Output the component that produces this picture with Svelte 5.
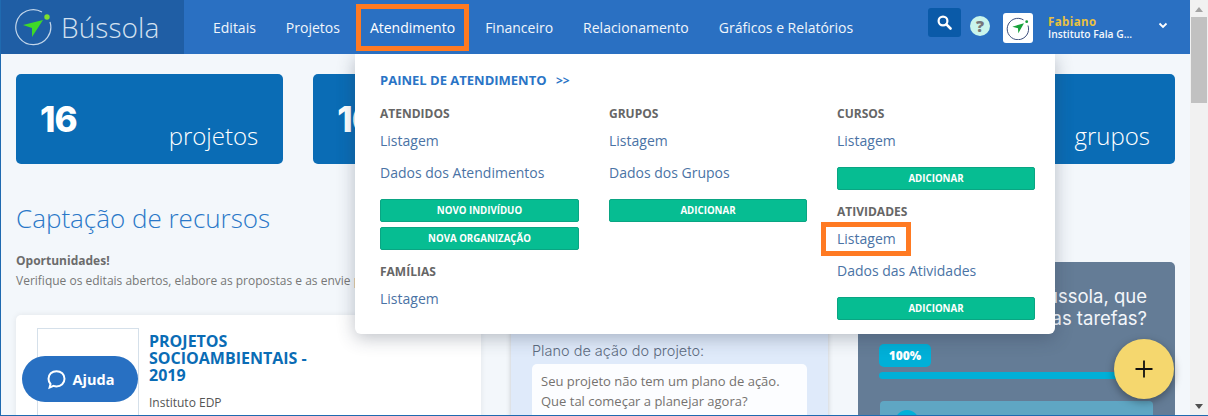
<script>
  const nav = ['Editais', 'Projetos', 'Atendimento', 'Financeiro', 'Relacionamento', 'Gráficos e Relatórios'];
</script>

<div class="window">
  <div class="main">
    <header class="topbar">
      <div class="brand">
        <svg class="compass" width="38" height="38" viewBox="0 0 38 38" aria-hidden="true">
          <path d="M28 4A17.500 17.500 0 1 0 36 14" fill="none" stroke="#c3d6ea" stroke-width="1.200" />
          <circle cx="33" cy="9" r="2.700" fill="#7ee02c" />
          <path d="M9 17 L29 12 L18 29 L18 20 Z" fill="#3fd928" />
        </svg>
        <span class="wordmark">Bússola</span>
      </div>
      <nav class="nav">
        {#each nav as item}
          <a class="nav-item" class:hot={item === 'Atendimento'} href="#top">{item}</a>
        {/each}
      </nav>
      <div class="tools">
        <button class="search" aria-label="Buscar">
          <svg width="15" height="15" viewBox="0 0 15 15"><circle cx="6" cy="6" r="4.400" fill="none" stroke="#fff" stroke-width="2.200"/><path d="M9.400 9.400 L13.500 13.500" stroke="#fff" stroke-width="2.600" stroke-linecap="round"/></svg>
        </button>
        <span class="help">?</span>
        <span class="org-logo">
          <svg width="24" height="24" viewBox="0 0 24 24" aria-hidden="true">
            <path d="M17.500 3.900A10.700 10.700 0 1 0 22 9.500" fill="none" stroke="#3c4e7c" stroke-width="1"/>
            <circle cx="20.700" cy="5.700" r="1.400" fill="#18a13a"/>
            <path d="M6.300 10.700 L18 7.300 L12.300 17.300 L12 12.300 Z" fill="#18a13a"/>
          </svg>
        </span>
        <div class="user">
          <strong>Fabiano</strong>
          <span>Instituto Fala G...</span>
        </div>
        <svg class="chev" width="10" height="7" viewBox="0 0 10 7"><path d="M1.500 1.500 L5 5 L8.500 1.500" fill="none" stroke="#fff" stroke-width="1.800"/></svg>
      </div>
    </header>

    <div class="content">
      <section class="stats">
        <div class="stat"><b>16</b><span>projetos</span></div>
        <div class="stat"><b>16</b><span>editais</span></div>
        <div class="stat"><b>16</b><span>pessoas</span></div>
        <div class="stat"><b>16</b><span>grupos</span></div>
      </section>

      <h1>Captação de recursos</h1>

      <section class="cols">
        <div class="col-left">
          <p class="opp"><b>Oportunidades!</b></p>
          <p class="opp-text">Verifique os editais abertos, elabore as propostas e as envie para os financiadores.</p>
          <article class="edital">
            <div class="thumb"></div>
            <div>
              <h2>PROJETOS SOCIOAMBIENTAIS - 2019</h2>
              <p>Instituto EDP</p>
            </div>
          </article>
        </div>
        <div class="plan">
          <h3>Plano de ação do projeto:</h3>
          <div class="plan-box">Seu projeto não tem um plano de ação.<br />Que tal começar a planejar agora?</div>
        </div>
        <div class="tasks">
          <h3>Que tal usar o Bússola, que<br />organiza as tarefas?</h3>
          <span class="pct">100%</span>
          <div class="bar"></div>
          <div class="task"><i></i></div>
        </div>
      </section>

      <div class="dropdown">
        <a class="panel-link" href="#top">PAINEL DE ATENDIMENTO <span>&gt;&gt;</span></a>
        <div class="menu-grid">
          <div class="menu-col">
            <h4>ATENDIDOS</h4>
            <a class="link" href="#top">Listagem</a>
            <a class="link" href="#top">Dados dos Atendimentos</a>
            <button class="act first">NOVO INDIVÍDUO</button>
            <button class="act tight">NOVA ORGANIZAÇÃO</button>
            <h4 class="later">FAMÍLIAS</h4>
            <a class="link" href="#top">Listagem</a>
          </div>
          <div class="menu-col">
            <h4>GRUPOS</h4>
            <a class="link" href="#top">Listagem</a>
            <a class="link" href="#top">Dados dos Grupos</a>
            <button class="act first">ADICIONAR</button>
          </div>
          <div class="menu-col">
            <h4>CURSOS</h4>
            <a class="link" href="#top">Listagem</a>
            <button class="act after-one">ADICIONAR</button>
            <h4 class="later">ATIVIDADES</h4>
            <a class="link boxed" href="#top">Listagem</a>
            <a class="link" href="#top">Dados das Atividades</a>
            <button class="act first">ADICIONAR</button>
          </div>
        </div>
      </div>

      <button class="ajuda">
        <svg width="21" height="21" viewBox="0 0 21 21" aria-hidden="true"><path d="M10.500 2.200c4.600 0 8 3.200 8 7.600s-3.400 7.600-8 7.600c-1.100 0-2-.2-3-.5L3.600 18.600l.9-3.600C3.200 13.600 2.500 11.800 2.500 9.800c0-4.400 3.400-7.600 8-7.600z" fill="none" stroke="#fff" stroke-width="2"/></svg>
        Ajuda
      </button>
      <button class="fab" aria-label="Adicionar">
        <svg width="20" height="20" viewBox="0 0 20 20"><path d="M10 1.500V18.500M1.500 10H18.500" stroke="#111" stroke-width="1.800"/></svg>
      </button>
    </div>
  </div>

  <aside class="scrollbar">
    <span class="up"></span>
    <span class="thumb-bar"></span>
    <span class="down"></span>
  </aside>
</div>

<style>
  :global(body) { margin: 0; overflow: hidden; }
  .window {
    width: 1208px;
    height: 416px;
    box-sizing: border-box;
    display: flex;
    border-left: 1px solid #1f6ab0;
    border-bottom: 1px solid #1f6ab0;
    font-family: "Open Sans", "Liberation Sans", sans-serif;
    background: #f3f7fb;
    overflow: hidden;
  }
  .main { flex: 1; min-width: 0; display: flex; flex-direction: column; }
  .topbar { height: 54px; flex: none; display: flex; align-items: stretch; background: #2a70c2; }
  .brand { width: 183px; flex: none; background: #1f5ea5; display: flex; align-items: center; padding-left: 13px; box-sizing: border-box; gap: 9px; }
  .compass { flex: none; }
  .wordmark { color: #d3e1f0; font-size: 28px; font-weight: 300; letter-spacing: .1px; }
  .nav { display: flex; align-items: center; margin-left: 29px; gap: 30px; }
  .nav-item { color: #f0f5fb; font-size: 14px; text-decoration: none; white-space: nowrap; }
  .nav-item.hot { border: 5px solid #ff7a22; padding: 9px 9px; margin: 0 -14px; color: #fff; }
  .tools { margin-left: auto; display: flex; align-items: center; position: relative; }
  .search { width: 33px; height: 29px; margin: -9px 9px 0 0; border: 0; border-radius: 3px; background: #0a5aa8; display: flex; align-items: center; justify-content: center; padding: 0; }
  .help { width: 20px; height: 20px; border-radius: 50%; background: #c9f5ec; color: #77777a; font-weight: 800; font-size: 16px; line-height: 20px; text-align: center; margin: -3px 13px 0 0; }
  .org-logo { width: 30px; height: 30px; margin: 2px 15px 0 0; background: #fff; border-radius: 3px; display: flex; align-items: center; justify-content: center; }
  .user { width: 105px; display: flex; flex-direction: column; margin-top: 1px; }
  .user strong { color: #e9c13f; font-size: 11.500px; line-height: 13px; letter-spacing: .4px; }
  .user span { color: #f4f7fb; font-size: 10.300px; font-weight: 600; line-height: 13px; white-space: nowrap; }
  .chev { margin: -4px 22px 0 5px; }

  .content { position: relative; flex: 1; padding: 20px 15px 0; min-height: 0; overflow: hidden; }
  .stats { display: grid; grid-template-columns: repeat(4, 1fr); gap: 30px; }
  .stat { height: 90px; background: #0a6cb5; border-radius: 5px; color: #fff; position: relative; display: flex; justify-content: space-between; padding: 0 25px 0 24px; box-sizing: border-box; }
  .stat b { font-family: "Inter", "Open Sans", sans-serif; font-size: 35px; font-weight: 800; line-height: 36px; margin-top: 27px; letter-spacing: -1px; }
  .stat span { font-size: 24px; font-weight: 300; line-height: 30px; margin-top: 47px; }
  h1 { margin: 37px 0 0; color: #2a78c8; font-size: 26px; font-weight: 300; line-height: 34px; }
  .cols { display: grid; grid-template-columns: 465px 317px 317px; gap: 30px; margin-top: 9px; align-items: start; }
  .opp { margin: 0; color: #6c6c6c; font-size: 12px; line-height: 16px; margin-top: 9px; }
  .opp-text { margin: 4px 0 0; color: #777; font-size: 12px; line-height: 16px; white-space: nowrap; }
  .edital { margin-top: 26px; height: 120px; background: #fff; border-radius: 5px; box-shadow: 0 0 6px rgba(0,0,0,.08); display: flex; padding: 13px 0 0 21px; box-sizing: border-box; gap: 10px; }
  .thumb { width: 100px; height: 110px; border: 1px solid #d5e0ea; flex: none; }
  h2 { margin: 5px 0 0; width: 190px; color: #0a6cb5; font-size: 16px; font-weight: 700; line-height: 17px; }
  .edital p { margin: 11px 0 0; font-size: 12px; color: #555; line-height: 16px; }
  .plan { margin-top: 18px; height: 170px; background: #dfeafa; box-shadow: 0 0 5px rgba(0,0,0,.2); padding: 79px 21px 0; box-sizing: border-box; }
  .plan h3 { margin: 0; color: #5d6c7f; font-size: 14.500px; font-weight: 300; line-height: 20px; font-family: "Inter", "Open Sans", sans-serif; }
  .plan-box { margin-top: 3px; background: #fcfdff; border-radius: 5px; padding: 7px 9px; height: 90px; box-sizing: border-box; color: #75726f; font-size: 13px; line-height: 20px; }
  .tasks { margin-top: 18px; height: 170px; background: #647c96; border-radius: 5px; padding: 21px 21px 0; box-sizing: border-box; position: relative; }
  .tasks h3 { margin: 0; width: 268px; color: #f3f6fa; font-size: 18.500px; font-weight: 400; line-height: 22px; text-align: right; white-space: nowrap; font-family: "Inter", "Open Sans", sans-serif; height: 61px; padding-top: 2px; box-sizing: border-box; }
  .pct { display: block; width: 52px; height: 23px; background: #00b0d8; border-radius: 5px; color: #fff; text-align: center; font-size: 12px; font-weight: 800; line-height: 23px; }
  .bar { margin-top: 5px; height: 7px; width: 260px; background: #00b0d8; border-radius: 4px; }
  .task { margin: 22px 1px 0; height: 60px; background: #5fa6c3; border-radius: 4px; padding: 9px 15px; box-sizing: border-box; }
  .task i { display: block; width: 24px; height: 24px; border-radius: 50%; background: #00b0d8; }

  .dropdown { position: absolute; left: 354px; top: 0; width: 700px; height: 280px; box-sizing: border-box; padding: 18px 20px 0 25px; background: #fff; border-radius: 0 0 6px 6px; box-shadow: 0 4px 18px rgba(40,50,70,.3); }
  .panel-link { display: block; color: #2a74c6; font-size: 13px; font-weight: 700; line-height: 16px; text-decoration: none; }
  .panel-link span { margin-left: 6px; font-size: 12px; }
  .menu-grid { display: grid; grid-template-columns: 199px 198px 198px; gap: 30px; margin-top: 17px; }
  .menu-col { display: flex; flex-direction: column; align-items: flex-start; }
  h4 { margin: 0; color: #666; font-size: 12px; font-weight: 700; line-height: 16px; }
  h4.later { margin-top: 14px; }
  .link { color: #4a73a5; font-size: 14px; line-height: 20px; margin-top: 9px; text-decoration: none; position: relative; }
  .link + .link { margin-top: 12px; }
  .link.boxed { z-index: 1; }
  .link.boxed::before { content: ""; position: absolute; inset: -7px -15px -7px -16px; border: 5px solid #ff7a22; }
  .act { width: 100%; height: 23px; border: 1px solid #0aa583; border-radius: 2px; background: #06bd92; color: #fff; font-family: inherit; font-size: 9.700px; font-weight: 700; padding: 0; line-height: 1; }
  .act.first { margin-top: 16px; }
  .act.tight { margin-top: 5px; }
  .act.after-one { margin-top: 16px; }
  .ajuda { position: absolute; left: 21px; top: 302px; width: 116px; height: 46px; border: 0; border-radius: 23px; background: #2870c2; color: #fff; font-family: inherit; font-size: 14.500px; font-weight: 700; display: flex; align-items: center; justify-content: center; gap: 6px; padding: 0; }
  .fab { position: absolute; left: 1113px; top: 285px; width: 60px; height: 60px; border: 0; border-radius: 50%; background: #f5d76e; box-shadow: 0 3px 8px rgba(0,0,0,.35); display: flex; align-items: center; justify-content: center; padding: 0; }

  .scrollbar { width: 18px; flex: none; background: #f1f1f1; display: flex; flex-direction: column; align-items: center; position: relative; }
  .up { margin-top: 7px; border: 4px solid transparent; border-top: 0; border-bottom: 5px solid #a3a3a3; width: 0; height: 0; }
  .thumb-bar { width: 16px; height: 86px; background: #c1c1c1; margin-top: 5px; }
  .down { margin-top: auto; margin-bottom: 6px; border: 4px solid transparent; border-bottom: 0; border-top: 5px solid #505050; width: 0; height: 0; }
</style>
